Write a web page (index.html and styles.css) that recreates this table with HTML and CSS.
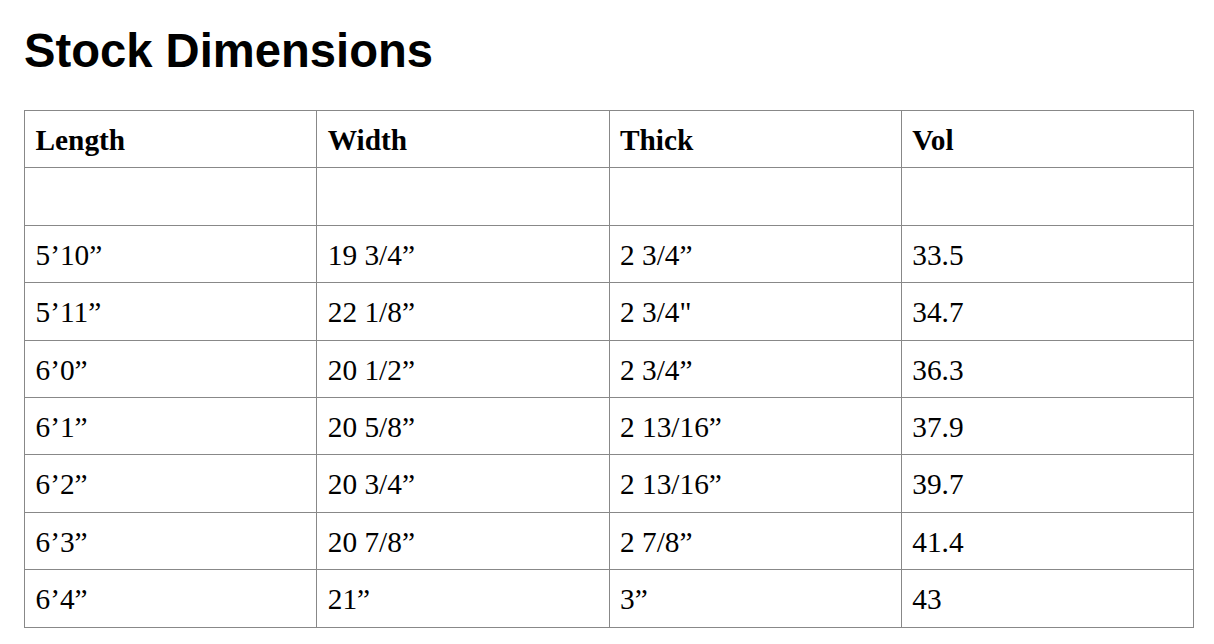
FILE: index.html
```html
<!DOCTYPE html>
<html lang="en">
<head>
<meta charset="utf-8">
<title>Stock Dimensions</title>
<link rel="stylesheet" href="styles.css">
</head>
<body>
<main class="page">
  <h1 class="title">Stock Dimensions</h1>
  <table class="dims">
    <thead>
      <tr><th>Length</th><th>Width</th><th>Thick</th><th>Vol</th></tr>
    </thead>
    <tbody>
      <tr><td></td><td></td><td></td><td></td></tr>
      <tr><td>5’10”</td><td>19 3/4”</td><td>2 3/4”</td><td>33.5</td></tr>
      <tr><td>5’11”</td><td>22 1/8”</td><td>2 3/4"</td><td>34.7</td></tr>
      <tr><td>6’0”</td><td>20 1/2”</td><td>2 3/4”</td><td>36.3</td></tr>
      <tr><td>6’1”</td><td>20 5/8”</td><td>2 13/16”</td><td>37.9</td></tr>
      <tr><td>6’2”</td><td>20 3/4”</td><td>2 13/16”</td><td>39.7</td></tr>
      <tr><td>6’3”</td><td>20 7/8”</td><td>2 7/8”</td><td>41.4</td></tr>
      <tr><td>6’4”</td><td>21”</td><td>3”</td><td>43</td></tr>
    </tbody>
  </table>
</main>
</body>
</html>
```
FILE: styles.css
```css
html, body {
  margin: 0;
  padding: 0;
  background: #ffffff;
}

.page {
  padding: 24px 21px 0 24px;
}

.title {
  margin: 0 0 32px 0;
  font-family: "Liberation Sans", Arial, sans-serif;
  font-weight: 700;
  font-size: 47.2px;
  line-height: 54px;
  color: #000000;
}

.dims {
  width: 1170px;
  border-collapse: collapse;
  table-layout: fixed;
  font-family: "Liberation Serif", "Times New Roman", serif;
  font-size: 29.33px;
  color: #000000;
}

.dims th,
.dims td {
  border: 1px solid #888888;
  padding: 12px 11px 10.4px 10.5px;
  line-height: 34px;
  height: 34px;
  text-align: left;
  vertical-align: middle;
}

.dims th {
  font-weight: 700;
}
```
